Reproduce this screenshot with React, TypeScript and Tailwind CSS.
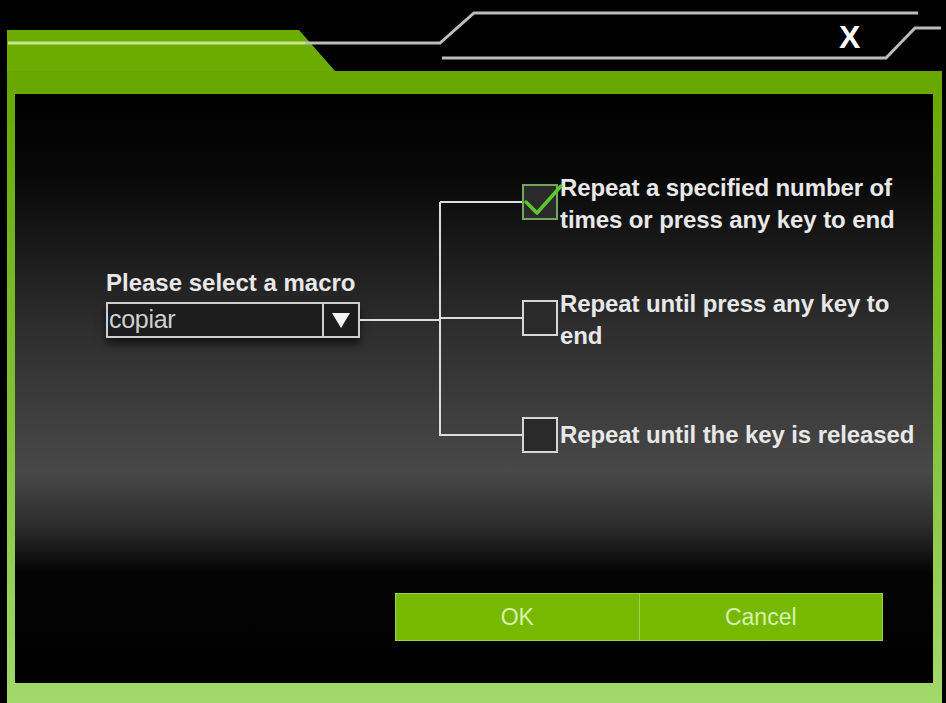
import React from "react";

const font = { fontFamily: '"Liberation Sans", Arial, sans-serif' };

function Checkbox({ checked }: { checked?: boolean }) {
  return (
    <div
      className={`relative h-[36px] w-[36px] shrink-0 border-2 bg-[#2a2a2a] ${
        checked ? "border-[#6fa85a]" : "border-[#d6d6d6]"
      }`}
    >
      {checked && (
        <svg className="absolute -left-[2px] -top-[4px]" width="42" height="40" viewBox="0 0 42 40">
          <path d="M4 20 L15 31 L39 4" fill="none" stroke="#5cc92e" strokeWidth="3.5" strokeLinecap="round" strokeLinejoin="round" />
        </svg>
      )}
    </div>
  );
}

export default function App() {
  return (
    <div className="relative h-[703px] w-[946px] overflow-hidden bg-black" style={font}>
      {/* header tab */}
      <div className="pl-[7px] pt-[30px]">
        <div
          className="h-[41px] w-[328px] bg-[#6cab00]"
          style={{ clipPath: "polygon(0 0, 292px 0, 328px 100%, 0 100%)" }}
        />
      </div>

      {/* frame */}
      <div className="ml-[7px] w-[935px] bg-gradient-to-b from-[#68a600] via-[#80bf30] to-[#a3d86b] pb-[20px] pl-[8px] pr-[9px] pt-[23px]">
        <div className="flex h-[589px] flex-col bg-[linear-gradient(to_bottom,#000_0%,#080808_14%,#2e2e2e_40%,#484848_64%,#2e2e2e_73%,#050505_81%,#000_100%)]">
          <div className="flex items-start">
            {/* macro select */}
            <div className="ml-[91px] mt-[177px] w-[254px]">
              <div className="whitespace-nowrap text-[24px] font-bold leading-[24px] tracking-[0px] text-[#e8e8e8]">
                Please select a macro
              </div>
              <div className="mt-[7px] flex h-[36px] border-2 border-[#cfcfcf] bg-[#1d1d1d] shadow-[0_6px_8px_rgba(0,0,0,0.6)]">
                <div className="flex flex-1 items-center pl-[1px] text-[25px] tracking-[-0.3px] text-[#d0d0d0]">copiar</div>
                <div className="flex w-[36px] items-center justify-center border-l-2 border-[#cfcfcf]">
                  <svg width="20" height="18" viewBox="0 0 20 18">
                    <path d="M1 2 L19 2 L10 17 Z" fill="#f4f4f4" />
                  </svg>
                </div>
              </div>
            </div>

            {/* connectors */}
            <svg className="mt-[106px] shrink-0" width="162" height="240" viewBox="0 0 162 240">
              <g stroke="#dcdcdc" strokeWidth="2" fill="none">
                <path d="M0 120 H80" />
                <path d="M80 2 V236" />
                <path d="M80 2 H162" />
                <path d="M80 118 H162" />
                <path d="M80 235 H162" />
              </g>
            </svg>

            {/* options */}
            <div className="mt-[78px] flex flex-col whitespace-nowrap text-[24px] font-bold leading-[32px] tracking-[-0.1px] text-[#e8e8e8]">
              <div className="flex items-start">
                <div className="mt-[12px]">
                  <Checkbox checked />
                </div>
                <div className="pl-[2px]">
                  Repeat a specified number of
                  <br />
                  times or press any key to end
                </div>
              </div>
              <div className="mt-[52px] flex items-start">
                <div className="mt-[12px]">
                  <Checkbox />
                </div>
                <div className="pl-[2px]">
                  Repeat until press any key to
                  <br />
                  end
                </div>
              </div>
              <div className="mt-[65px] flex items-center">
                <Checkbox />
                <div className="pl-[2px]">Repeat until the key is released</div>
              </div>
            </div>
          </div>

          {/* buttons */}
          <div className="mb-[42px] ml-[380px] mt-auto flex h-[48px] w-[488px] border border-[#9ad24a] bg-[#76b900] text-[23px] text-[#d6f2a8]">
            <button className="flex flex-1 items-center justify-center">OK</button>
            <div className="w-px bg-[#9ad24a]" />
            <button className="flex flex-1 items-center justify-center">Cancel</button>
          </div>
        </div>
      </div>

      {/* header decoration lines */}
      <svg className="pointer-events-none absolute left-0 top-0" width="946" height="94" viewBox="0 0 946 94">
        <path d="M8 43 H305" stroke="#c9e88e" strokeWidth="3" fill="none" />
        <path d="M305 43 H440 L474 13 H918" stroke="#bcbcbc" strokeWidth="3" fill="none" />
        <path d="M442 58 H886 L915 28 H941" stroke="#bcbcbc" strokeWidth="3" fill="none" />
      </svg>
      <div className="absolute left-[839px] top-[17px] text-[32px] font-bold leading-[40px] text-white">X</div>
    </div>
  );
}
